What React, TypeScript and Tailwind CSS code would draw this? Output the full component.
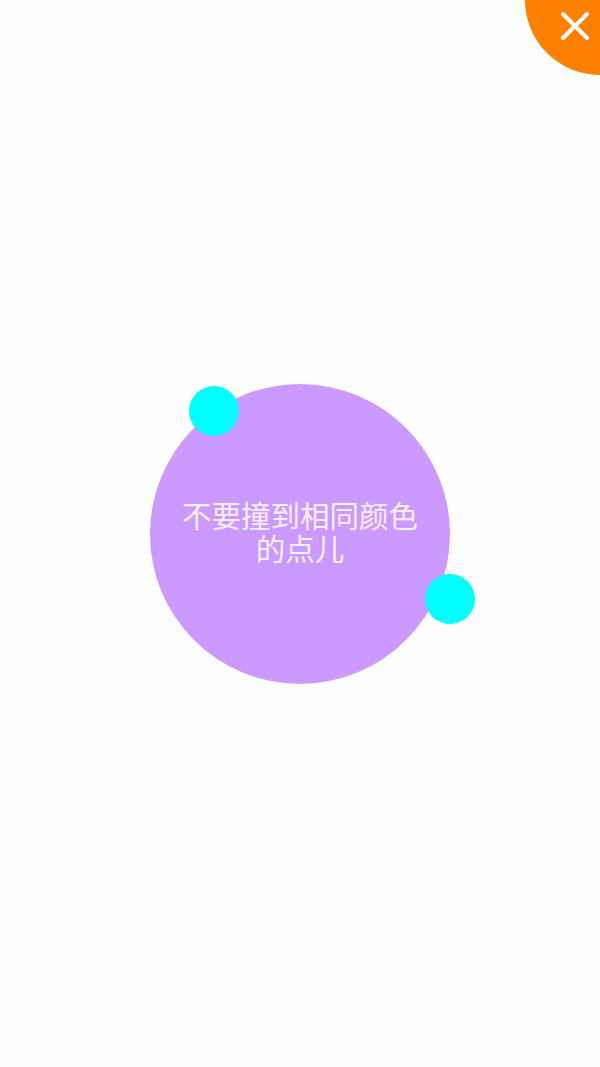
import React from 'react';

// Game intro screen: a purple planet with two cyan dots orbiting it
export default function App() {
  return (
    <div className="relative w-[600px] h-[1067px] overflow-hidden bg-[#fefefe] flex items-center justify-center">
      {/* Close button, a quarter circle in the corner */}
      <button className="absolute -top-[75px] -right-[75px] w-[150px] h-[150px] rounded-full bg-[#ff8000]">
        <svg
          className="absolute left-[35px] bottom-[34px]"
          width="30"
          height="30"
          viewBox="0 0 30 30"
          fill="none"
          stroke="white"
          strokeWidth="4"
          strokeLinecap="round"
        >
          <path d="M3 3 L27 27 M27 3 L3 27" />
        </svg>
      </button>

      {/* Planet */}
      <div className="relative w-[300px] h-[300px] rounded-full bg-[#cc99ff] flex items-center justify-center">
        <p
          className="w-[250px] -mt-[6px] text-center text-[29.5px] leading-[33px] font-normal text-[#f8f0ff]"
          style={{ fontFamily: '"Noto Sans CJK SC", "Noto Sans", sans-serif' }}
        >
          不要撞到相同颜色
          <br />
          的点儿
        </p>

        {/* Orbiting dots */}
        <div className="absolute left-[39px] top-[2px] w-[50px] h-[50px] rounded-full bg-[#00ffff]" />
        <div className="absolute left-[275px] top-[190px] w-[50px] h-[50px] rounded-full bg-[#00ffff]" />
      </div>
    </div>
  );
}
